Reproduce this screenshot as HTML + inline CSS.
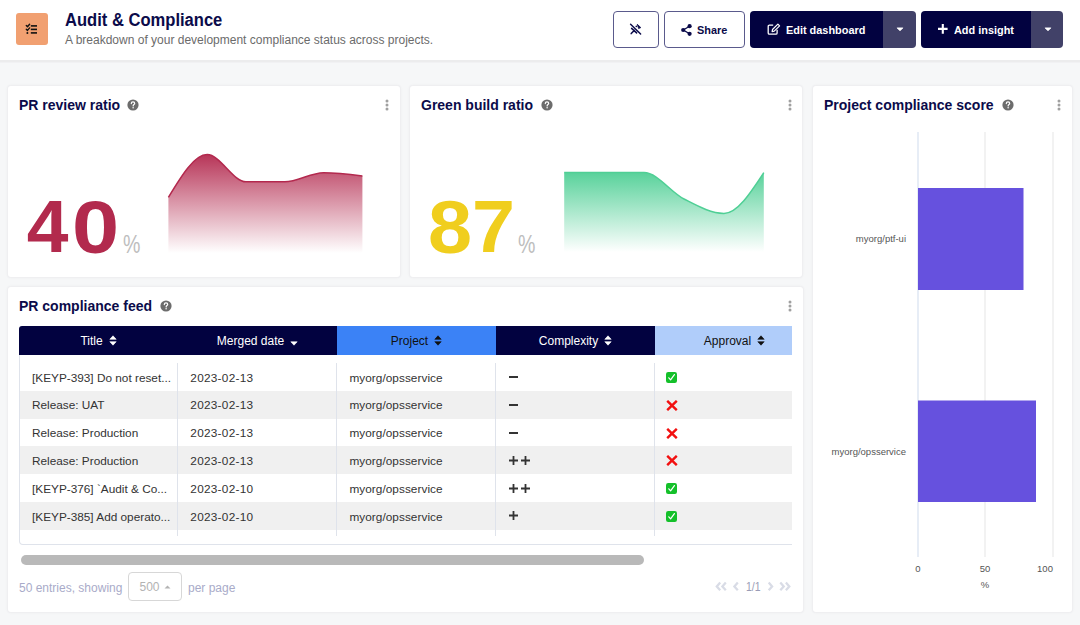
<!DOCTYPE html>
<html><head><meta charset="utf-8">
<style>
*{box-sizing:border-box;margin:0;padding:0}
html,body{width:1080px;height:625px;overflow:hidden;background:#f6f7f8;font-family:"Liberation Sans",sans-serif;}
.abs{position:absolute}
#hdr{position:absolute;left:0;top:0;width:1080px;height:60px;background:#fff;box-shadow:0 2px 0 #ececed,0 3px 0 #f1f1f3;}
#logo{position:absolute;left:16px;top:13px;width:32px;height:32px;background:#f1a071;border-radius:3px;}
#title{position:absolute;left:65px;top:10px;font-size:18px;transform:scaleX(0.92);transform-origin:0 0;font-weight:bold;color:#0b0b4a;white-space:nowrap;}
#sub{position:absolute;left:65px;top:33px;font-size:12px;color:#6b6b6b;white-space:nowrap;}
.btn{position:absolute;top:10.5px;height:37.5px;border-radius:4px;font-size:12px;font-weight:bold;white-space:nowrap;display:flex;align-items:center;justify-content:center}
.outl{border:1.3px solid #5a5a8c;background:#fff;color:#0b0b4a}
.dark{background:#020240;color:#fff}
.drop{background:#414168}
.card{position:absolute;background:#fff;border-radius:3px;box-shadow:0 0 0 1px #efeff1,0 0 3px 1px rgba(0,0,0,0.035);}
.ct{position:absolute;left:11px;top:11px;font-size:14px;font-weight:bold;color:#0b0b4a;white-space:nowrap}
.help{position:absolute;width:11px;height:11px;border-radius:50%;background:#6b6b6b;color:#fff;font-size:8px;font-weight:bold;text-align:center;line-height:11px}
.keb{position:absolute;width:3px;}
.keb i{display:block;width:3px;height:3px;border-radius:50%;background:#a3a3a3;margin-bottom:1px}
.big{position:absolute;font-size:72px;font-weight:bold;white-space:nowrap;line-height:1}
.pct{position:absolute;font-size:25px;color:#c2c2c2;line-height:1}
.lbl{font-size:9.5px;color:#555;white-space:nowrap;line-height:11px}
.th{height:29px;font-size:12px;display:flex;align-items:center;justify-content:center;white-space:nowrap}
.td{font-size:11.8px;color:#333;white-space:nowrap}
.ft{font-size:12px;line-height:14px;color:#a9abc9;white-space:nowrap}
.btxt{position:absolute;top:22.5px;font-size:11.3px;line-height:14px;font-weight:bold;white-space:nowrap;transform:scaleX(0.965);transform-origin:0 0}
</style></head><body><div id="root" style="position:absolute;left:0;top:0;width:1080px;height:625px">
<div id="hdr">
  <div id="logo"><svg width="32" height="32" viewBox="0 0 32 32" style="position:absolute;left:0;top:0">
    <path d="M10.3 12.6 L11.5 13.8 L13.6 11.3" stroke="#111" stroke-width="1.4" fill="none" stroke-linecap="round" stroke-linejoin="round"/>
    <path d="M10.3 16.2 L11.5 17.4 L13.6 14.9" stroke="#111" stroke-width="1.4" fill="none" stroke-linecap="round" stroke-linejoin="round"/>
    <circle cx="11.4" cy="19.9" r="1" fill="#111"/>
    <rect x="14.8" y="12.1" width="6.2" height="1.6" fill="#111"/>
    <rect x="14.8" y="15.6" width="6.2" height="1.6" fill="#111"/>
    <rect x="14.8" y="19.1" width="6.2" height="1.6" fill="#111"/>
  </svg></div>
  <div id="title">Audit &amp; Compliance</div>
  <div id="sub">A breakdown of your development compliance status across projects.</div>
  <div class="btn outl" style="left:613px;width:46px"><svg class="abs" style="left:11.7px;top:7.2px" width="20" height="20" viewBox="0 0 20 20"><path d="M4.6 5.3 L14.6 15 M5.6 9.4 L10.6 13.9 M5.2 14.6 L8.2 11.4" stroke="#0b0b4a" stroke-width="1.5" stroke-linecap="round"/><path d="M11.3 5.3 L14.8 8.6 L12.6 9.6 Z" fill="#0b0b4a" stroke="#0b0b4a" stroke-width="0.8" stroke-linejoin="round"/><circle cx="10.3" cy="7.4" r="0.8" fill="#0b0b4a"/></svg></div>
  <div class="btn outl" style="left:664px;width:81px"></div>
  <svg class="abs" style="left:681px;top:23.5px" width="11" height="12" viewBox="0 0 11 12"><circle cx="8.6" cy="2.2" r="2.1" fill="#0b0b4a"/><circle cx="2.2" cy="6" r="2.1" fill="#0b0b4a"/><circle cx="8.6" cy="9.8" r="2.1" fill="#0b0b4a"/><path d="M8.6 2.2 L2.2 6 L8.6 9.8" stroke="#0b0b4a" stroke-width="1.3" fill="none"/></svg>
  <div class="abs btxt" style="left:696.5px;color:#0b0b4a">Share</div>
  <div class="btn dark" style="left:750px;width:133px;border-radius:4px 0 0 4px"></div>
  <svg class="abs" style="left:767px;top:23px" width="14" height="12" viewBox="0 0 14 12"><path d="M6.2 2.2 H2.4 Q1.2 2.2 1.2 3.4 V9.9 Q1.2 11.1 2.4 11.1 H8.9 Q10.1 11.1 10.1 9.9 V6.8" stroke="#fff" stroke-width="1.3" fill="none"/><path d="M10.9 1.1 L12.6 2.8 L7.2 8.2 L5.1 8.6 L5.5 6.5 Z" stroke="#fff" stroke-width="1.2" fill="none" stroke-linejoin="round"/></svg>
  <div class="abs btxt" style="left:786px;color:#fff">Edit dashboard</div>
  <div class="btn drop" style="left:883px;width:33px;border-radius:0 4px 4px 0"></div>
  <svg class="abs" style="left:895.5px;top:27.3px" width="8" height="5" viewBox="0 0 8 5"><path d="M1.1 0.9 H6.9 L4 3.8 Z" fill="#fff" stroke="#fff" stroke-width="0.8" stroke-linejoin="round"/></svg>
  <div class="btn dark" style="left:921px;width:110px;border-radius:4px 0 0 4px"></div>
  <svg class="abs" style="left:938.3px;top:24.2px" width="10" height="10" viewBox="0 0 10 10"><path d="M4.8 0 V9.7 M0 4.85 H9.6" stroke="#fff" stroke-width="2.1"/></svg>
  <div class="abs btxt" style="left:954px;color:#fff">Add insight</div>
  <div class="btn drop" style="left:1031px;width:32px;border-radius:0 4px 4px 0"></div>
  <svg class="abs" style="left:1043.5px;top:27.3px" width="8" height="5" viewBox="0 0 8 5"><path d="M1.1 0.9 H6.9 L4 3.8 Z" fill="#fff" stroke="#fff" stroke-width="0.8" stroke-linejoin="round"/></svg>
</div>
</div>

<div class="card" style="left:8px;top:86px;width:392px;height:191px"></div>
<div class="card" style="left:410px;top:86px;width:392px;height:191px"></div>
<div class="card" style="left:813px;top:86px;width:259px;height:526px"></div>
<div class="card" style="left:8px;top:287px;width:795px;height:325px"></div>
<div class="ct" style="left:19px;top:97px">PR review ratio</div>
<svg class="abs" style="left:127.19999999999999px;top:99px" width="12" height="12" viewBox="0 0 12 12"><circle cx="6" cy="6" r="5.6" fill="#6c6c6c"/><path d="M4.3 4.6 C4.3 3.5 5.1 2.9 6 2.9 C6.9 2.9 7.7 3.5 7.7 4.4 C7.7 5.4 6.4 5.6 6.2 6.5 L6.2 7" stroke="#fff" stroke-width="1.2" fill="none" stroke-linecap="round"/><circle cx="6.1" cy="8.7" r="0.75" fill="#fff"/></svg>
<svg class="abs" style="left:385px;top:99px" width="4" height="12" viewBox="0 0 4 12"><circle cx="2" cy="2" r="1.5" fill="#a0a0a0"/><circle cx="2" cy="6" r="1.5" fill="#a0a0a0"/><circle cx="2" cy="10" r="1.5" fill="#a0a0a0"/></svg>
<div class="ct" style="left:421px;top:97px">Green build ratio</div>
<svg class="abs" style="left:540.5px;top:99px" width="12" height="12" viewBox="0 0 12 12"><circle cx="6" cy="6" r="5.6" fill="#6c6c6c"/><path d="M4.3 4.6 C4.3 3.5 5.1 2.9 6 2.9 C6.9 2.9 7.7 3.5 7.7 4.4 C7.7 5.4 6.4 5.6 6.2 6.5 L6.2 7" stroke="#fff" stroke-width="1.2" fill="none" stroke-linecap="round"/><circle cx="6.1" cy="8.7" r="0.75" fill="#fff"/></svg>
<svg class="abs" style="left:787.5px;top:99px" width="4" height="12" viewBox="0 0 4 12"><circle cx="2" cy="2" r="1.5" fill="#a0a0a0"/><circle cx="2" cy="6" r="1.5" fill="#a0a0a0"/><circle cx="2" cy="10" r="1.5" fill="#a0a0a0"/></svg>
<div class="ct" style="left:824px;top:97px">Project compliance score</div>
<svg class="abs" style="left:1002px;top:99px" width="12" height="12" viewBox="0 0 12 12"><circle cx="6" cy="6" r="5.6" fill="#6c6c6c"/><path d="M4.3 4.6 C4.3 3.5 5.1 2.9 6 2.9 C6.9 2.9 7.7 3.5 7.7 4.4 C7.7 5.4 6.4 5.6 6.2 6.5 L6.2 7" stroke="#fff" stroke-width="1.2" fill="none" stroke-linecap="round"/><circle cx="6.1" cy="8.7" r="0.75" fill="#fff"/></svg>
<svg class="abs" style="left:1057px;top:99px" width="4" height="12" viewBox="0 0 4 12"><circle cx="2" cy="2" r="1.5" fill="#a0a0a0"/><circle cx="2" cy="6" r="1.5" fill="#a0a0a0"/><circle cx="2" cy="10" r="1.5" fill="#a0a0a0"/></svg>
<div class="ct" style="left:19px;top:298px">PR compliance feed</div>
<svg class="abs" style="left:160px;top:300px" width="12" height="12" viewBox="0 0 12 12"><circle cx="6" cy="6" r="5.6" fill="#6c6c6c"/><path d="M4.3 4.6 C4.3 3.5 5.1 2.9 6 2.9 C6.9 2.9 7.7 3.5 7.7 4.4 C7.7 5.4 6.4 5.6 6.2 6.5 L6.2 7" stroke="#fff" stroke-width="1.2" fill="none" stroke-linecap="round"/><circle cx="6.1" cy="8.7" r="0.75" fill="#fff"/></svg>
<svg class="abs" style="left:788px;top:300px" width="4" height="12" viewBox="0 0 4 12"><circle cx="2" cy="2" r="1.5" fill="#a0a0a0"/><circle cx="2" cy="6" r="1.5" fill="#a0a0a0"/><circle cx="2" cy="10" r="1.5" fill="#a0a0a0"/></svg>
<div class="abs" style="left:26.7px;top:189.3px;font-size:75px;line-height:75px;font-weight:bold;color:#b22a4d;transform:scaleX(1.0);transform-origin:0 0">4</div>
<div class="abs" style="left:72.0px;top:189.8px;font-size:75px;line-height:75px;font-weight:bold;color:#b22a4d;transform:scaleX(1.13);transform-origin:0 0">0</div>
<div class="abs" style="left:123.1px;top:231.6px;font-size:25.3px;line-height:25.3px;font-weight:normal;color:#bdbdbd;transform:scaleX(0.773);transform-origin:0 0">%</div>
<div class="abs" style="left:427.7px;top:189.8px;font-size:75px;line-height:75px;font-weight:bold;color:#f0ce1e;transform:scaleX(1.057);transform-origin:0 0">8</div>
<div class="abs" style="left:471.5px;top:189.3px;font-size:75px;line-height:75px;font-weight:bold;color:#f0ce1e;transform:scaleX(1.03);transform-origin:0 0">7</div>
<div class="abs" style="left:518.0px;top:231.6px;font-size:25.3px;line-height:25.3px;font-weight:normal;color:#bdbdbd;transform:scaleX(0.773);transform-origin:0 0">%</div>
<div class="abs lbl" style="right:174px;top:233px">myorg/ptf-ui</div>
<div class="abs lbl" style="right:174px;top:446px">myorg/opsservice</div>
<div class="abs lbl" style="left:918px;top:563px;transform:translateX(-50%)">0</div>
<div class="abs lbl" style="left:985px;top:563px;transform:translateX(-50%)">50</div>
<div class="abs lbl" style="left:1045px;top:563px;transform:translateX(-50%)">100</div>
<div class="abs lbl" style="left:985px;top:579px;transform:translateX(-50%)">%</div>
<div class="abs" style="left:19px;top:326px;width:773px;height:220px;overflow:hidden">
<div class="abs th" style="left:0px;top:0;width:159px;background:#020240;color:#fff;border-top-left-radius:3px;">Title<svg width="8" height="11" viewBox="0 0 8 11" style="margin-left:6px"><path d="M0.8 4.3 L4 0.8 L7.2 4.3 Z M0.8 6.7 L4 10.2 L7.2 6.7 Z" fill="#fff" stroke="#fff" stroke-width="0.6" stroke-linejoin="round"/></svg></div>
<div class="abs th" style="left:159px;top:0;width:159px;background:#020240;color:#fff;">Merged date<svg width="8" height="5" viewBox="0 0 8 5" style="margin-left:6px;margin-top:5px"><path d="M0.8 0.8 H7.2 L4 4.2 Z" fill="#fff" stroke="#fff" stroke-width="0.6" stroke-linejoin="round"/></svg></div>
<div class="abs th" style="left:318px;top:0;width:159px;background:#3b82f6;color:#111;">Project<svg width="8" height="11" viewBox="0 0 8 11" style="margin-left:6px"><path d="M0.8 4.3 L4 0.8 L7.2 4.3 Z M0.8 6.7 L4 10.2 L7.2 6.7 Z" fill="#111" stroke="#111" stroke-width="0.6" stroke-linejoin="round"/></svg></div>
<div class="abs th" style="left:477px;top:0;width:159px;background:#020240;color:#fff;">Complexity<svg width="8" height="11" viewBox="0 0 8 11" style="margin-left:6px"><path d="M0.8 4.3 L4 0.8 L7.2 4.3 Z M0.8 6.7 L4 10.2 L7.2 6.7 Z" fill="#fff" stroke="#fff" stroke-width="0.6" stroke-linejoin="round"/></svg></div>
<div class="abs th" style="left:636px;top:0;width:159px;background:#b0cdfa;color:#111;">Approval<svg width="8" height="11" viewBox="0 0 8 11" style="margin-left:6px"><path d="M0.8 4.3 L4 0.8 L7.2 4.3 Z M0.8 6.7 L4 10.2 L7.2 6.7 Z" fill="#111" stroke="#111" stroke-width="0.6" stroke-linejoin="round"/></svg></div>
<div class="abs" style="left:0;top:29px;width:900px;height:190px;border:1px solid #dfe3eb;border-top:none;border-radius:0 0 0 4px"></div>
<div class="abs" style="left:1px;top:37.0px;width:800px;height:27.8px;background:#fff"></div>
<div class="abs td" style="left:13.0px;top:38.5px;line-height:27.8px;letter-spacing:0">[KEYP-393] Do not reset...</div>
<div class="abs td" style="left:171.3px;top:38.5px;line-height:27.8px;letter-spacing:0.27px">2023-02-13</div>
<div class="abs td" style="left:330.4px;top:38.5px;line-height:27.8px;letter-spacing:0.05px">myorg/opsservice</div>
<div class="abs" style="left:490px;top:49.9px;width:9px;height:2px;background:#333"></div>
<svg class="abs" style="left:647px;top:46.1px" width="11" height="11" viewBox="0 0 11 11"><rect x="0" y="0" width="11" height="11" rx="2.2" fill="#14c02a"/><path d="M2.8 5.8 L4.6 7.9 L8.4 2.6" stroke="#fff" stroke-width="1.2" fill="none" stroke-linecap="round" stroke-linejoin="round"/></svg>
<div class="abs" style="left:1px;top:64.8px;width:800px;height:27.8px;background:#f0f0f0"></div>
<div class="abs td" style="left:13.0px;top:66.3px;line-height:27.8px;letter-spacing:0">Release: UAT</div>
<div class="abs td" style="left:171.3px;top:66.3px;line-height:27.8px;letter-spacing:0.27px">2023-02-13</div>
<div class="abs td" style="left:330.4px;top:66.3px;line-height:27.8px;letter-spacing:0.05px">myorg/opsservice</div>
<div class="abs" style="left:490px;top:77.7px;width:9px;height:2px;background:#333"></div>
<svg class="abs" style="left:647px;top:73.8px" width="12" height="11" viewBox="0 0 12 11"><path d="M1.2 0.8 L10.8 10.2 M10.8 0.8 L1.2 10.2" stroke="#f21010" stroke-width="2.4"/></svg>
<div class="abs" style="left:1px;top:92.6px;width:800px;height:27.8px;background:#fff"></div>
<div class="abs td" style="left:13.0px;top:94.1px;line-height:27.8px;letter-spacing:0">Release: Production</div>
<div class="abs td" style="left:171.3px;top:94.1px;line-height:27.8px;letter-spacing:0.27px">2023-02-13</div>
<div class="abs td" style="left:330.4px;top:94.1px;line-height:27.8px;letter-spacing:0.05px">myorg/opsservice</div>
<div class="abs" style="left:490px;top:105.5px;width:9px;height:2px;background:#333"></div>
<svg class="abs" style="left:647px;top:101.6px" width="12" height="11" viewBox="0 0 12 11"><path d="M1.2 0.8 L10.8 10.2 M10.8 0.8 L1.2 10.2" stroke="#f21010" stroke-width="2.4"/></svg>
<div class="abs" style="left:1px;top:120.4px;width:800px;height:27.8px;background:#f0f0f0"></div>
<div class="abs td" style="left:13.0px;top:121.9px;line-height:27.8px;letter-spacing:0">Release: Production</div>
<div class="abs td" style="left:171.3px;top:121.9px;line-height:27.8px;letter-spacing:0.27px">2023-02-13</div>
<div class="abs td" style="left:330.4px;top:121.9px;line-height:27.8px;letter-spacing:0.05px">myorg/opsservice</div>
<svg class="abs" style="left:490.0px;top:129.8px" width="9" height="9" viewBox="0 0 9 9"><path d="M4.5 0 V9 M0 4.5 H9" stroke="#333" stroke-width="1.8"/></svg>
<svg class="abs" style="left:502.2px;top:129.8px" width="9" height="9" viewBox="0 0 9 9"><path d="M4.5 0 V9 M0 4.5 H9" stroke="#333" stroke-width="1.8"/></svg>
<svg class="abs" style="left:647px;top:129.4px" width="12" height="11" viewBox="0 0 12 11"><path d="M1.2 0.8 L10.8 10.2 M10.8 0.8 L1.2 10.2" stroke="#f21010" stroke-width="2.4"/></svg>
<div class="abs" style="left:1px;top:148.2px;width:800px;height:27.8px;background:#fff"></div>
<div class="abs td" style="left:13.0px;top:149.7px;line-height:27.8px;letter-spacing:0">[KEYP-376] `Audit &amp; Co...</div>
<div class="abs td" style="left:171.3px;top:149.7px;line-height:27.8px;letter-spacing:0.27px">2023-02-10</div>
<div class="abs td" style="left:330.4px;top:149.7px;line-height:27.8px;letter-spacing:0.05px">myorg/opsservice</div>
<svg class="abs" style="left:490.0px;top:157.6px" width="9" height="9" viewBox="0 0 9 9"><path d="M4.5 0 V9 M0 4.5 H9" stroke="#333" stroke-width="1.8"/></svg>
<svg class="abs" style="left:502.2px;top:157.6px" width="9" height="9" viewBox="0 0 9 9"><path d="M4.5 0 V9 M0 4.5 H9" stroke="#333" stroke-width="1.8"/></svg>
<svg class="abs" style="left:647px;top:157.3px" width="11" height="11" viewBox="0 0 11 11"><rect x="0" y="0" width="11" height="11" rx="2.2" fill="#14c02a"/><path d="M2.8 5.8 L4.6 7.9 L8.4 2.6" stroke="#fff" stroke-width="1.2" fill="none" stroke-linecap="round" stroke-linejoin="round"/></svg>
<div class="abs" style="left:1px;top:176.0px;width:800px;height:27.8px;background:#f0f0f0"></div>
<div class="abs td" style="left:13.0px;top:177.5px;line-height:27.8px;letter-spacing:0">[KEYP-385] Add operato...</div>
<div class="abs td" style="left:171.3px;top:177.5px;line-height:27.8px;letter-spacing:0.27px">2023-02-10</div>
<div class="abs td" style="left:330.4px;top:177.5px;line-height:27.8px;letter-spacing:0.05px">myorg/opsservice</div>
<svg class="abs" style="left:490.0px;top:185.4px" width="9" height="9" viewBox="0 0 9 9"><path d="M4.5 0 V9 M0 4.5 H9" stroke="#333" stroke-width="1.8"/></svg>
<svg class="abs" style="left:647px;top:185.1px" width="11" height="11" viewBox="0 0 11 11"><rect x="0" y="0" width="11" height="11" rx="2.2" fill="#14c02a"/><path d="M2.8 5.8 L4.6 7.9 L8.4 2.6" stroke="#fff" stroke-width="1.2" fill="none" stroke-linecap="round" stroke-linejoin="round"/></svg>
<div class="abs" style="left:158px;top:37px;width:1px;height:172.5px;background:#dfe3eb"></div>
<div class="abs" style="left:317px;top:37px;width:1px;height:172.5px;background:#dfe3eb"></div>
<div class="abs" style="left:476px;top:37px;width:1px;height:172.5px;background:#dfe3eb"></div>
<div class="abs" style="left:635px;top:37px;width:1px;height:172.5px;background:#dfe3eb"></div>
</div>
<div class="abs" style="left:20.5px;top:555px;width:623.5px;height:10px;border-radius:5px;background:#b9b9b9"></div>
<div class="abs ft" style="left:19px;top:580.5px">50 entries, showing</div>
<div class="abs" style="left:127.5px;top:572px;width:54px;height:29px;border:1px solid #d7d7d7;border-radius:4px"></div>
<div class="abs" style="left:139.5px;top:580px;font-size:12px;line-height:14px;color:#b3b3b3">500</div>
<svg class="abs" style="left:163.5px;top:585px" width="7" height="4" viewBox="0 0 7 4"><path d="M0.5 3.5 L3.5 0.5 L6.5 3.5 Z" fill="#b3b3b3"/></svg>
<div class="abs ft" style="left:188px;top:580.5px">per page</div>
<svg class="abs" style="left:714px;top:580px" width="80" height="13" viewBox="0 0 80 13"><path d="M6.2 2.6 L2.8 6.4 L6.2 10.2 M11.8 2.6 L8.4 6.4 L11.8 10.2" stroke="#d9dce6" stroke-width="2.3" fill="none"/><path d="M23.8 2.6 L20.4 6.4 L23.8 10.2" stroke="#d9dce6" stroke-width="2.3" fill="none"/><path d="M54.7 2.6 L58.1 6.4 L54.7 10.2" stroke="#d9dce6" stroke-width="2.3" fill="none"/><path d="M66.3 2.6 L69.7 6.4 L66.3 10.2 M71.9 2.6 L75.3 6.4 L71.9 10.2" stroke="#d9dce6" stroke-width="2.3" fill="none"/></svg>
<div class="abs" style="left:746px;top:579.5px;font-size:12px;line-height:14px;color:#9a9cb6;transform:scaleX(0.87);transform-origin:0 0">1/1</div>
<svg class="abs" style="left:0;top:0" width="1080" height="625" viewBox="0 0 1080 625"><defs><linearGradient id="g1" x1="0" y1="154" x2="0" y2="253" gradientUnits="userSpaceOnUse"><stop offset="0" stop-color="#b3294e" stop-opacity="0.95"/><stop offset="1" stop-color="#b3294e" stop-opacity="0"/></linearGradient></defs>
<path d="M168.4,197.4 C181.3,176.0 194.3,154.6 207.2,154.6 C220.1,154.6 233.1,181.8 246.0,181.8 C258.9,181.8 271.9,181.8 284.8,181.8 C297.7,181.8 310.7,172.7 323.6,172.7 C336.5,172.7 349.5,174.3 362.4,176.0 L362.4,253 L168.4,253 Z" fill="url(#g1)"/><path d="M168.4,197.4 C181.3,176.0 194.3,154.6 207.2,154.6 C220.1,154.6 233.1,181.8 246.0,181.8 C258.9,181.8 271.9,181.8 284.8,181.8 C297.7,181.8 310.7,172.7 323.6,172.7 C336.5,172.7 349.5,174.3 362.4,176.0" fill="none" stroke="#b3294e" stroke-width="1.5"/><defs><linearGradient id="g2" x1="0" y1="172" x2="0" y2="252" gradientUnits="userSpaceOnUse"><stop offset="0" stop-color="#4fcf95" stop-opacity="0.95"/><stop offset="1" stop-color="#4fcf95" stop-opacity="0"/></linearGradient></defs>
<path d="M564.2,172.6 C577.5,172.6 590.8,172.6 604.1,172.6 C617.4,172.6 630.7,172.6 644.0,172.6 C657.3,172.6 670.7,192.2 684.0,199.0 C697.3,205.8 710.6,213.4 723.9,213.4 C737.2,213.4 750.5,193.0 763.8,172.6 L763.8,252 L564.2,252 Z" fill="url(#g2)"/><path d="M564.2,172.6 C577.5,172.6 590.8,172.6 604.1,172.6 C617.4,172.6 630.7,172.6 644.0,172.6 C657.3,172.6 670.7,192.2 684.0,199.0 C697.3,205.8 710.6,213.4 723.9,213.4 C737.2,213.4 750.5,193.0 763.8,172.6" fill="none" stroke="#4fcf95" stroke-width="1.5"/><rect x="917.5" y="132" width="1" height="425" fill="#cfdcee"/><rect x="984.5" y="132" width="1" height="425" fill="#e6e6e6"/><rect x="1052.5" y="132" width="1" height="425" fill="#e6e6e6"/><rect x="918" y="188" width="105.5" height="102" fill="#6651de"/><rect x="918" y="400.5" width="118" height="101.5" fill="#6651de"/></svg>
</div></body></html>
